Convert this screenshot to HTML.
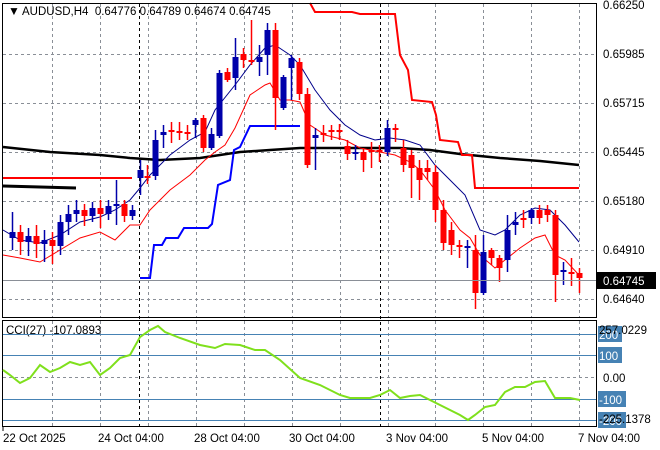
<!DOCTYPE html>
<html><head><meta charset="utf-8"><style>
html,body{margin:0;padding:0;background:#fff;width:660px;height:450px;overflow:hidden}
svg{display:block}
text{font-family:"Liberation Sans",sans-serif;font-size:11.5px;fill:#000}
</style></head><body>
<svg id="s" width="660" height="450" viewBox="0 0 660 450" xmlns="http://www.w3.org/2000/svg">
<g id="grid" stroke="#8a8f97" stroke-dasharray="3,3" stroke-width="1"></g>
<!-- price axis labels -->
<text x="603" y="9">0.66250</text>
<text x="603" y="58">0.65985</text>
<text x="603" y="107">0.65715</text>
<text x="603" y="156">0.65445</text>
<text x="603" y="205">0.65180</text>
<text x="603" y="254">0.64910</text>
<text x="603" y="303">0.64640</text>
<g id="main"></g>
<line x1="2" y1="280.5" x2="596" y2="280.5" stroke="#8a8f97"/>
<rect x="597" y="272" width="59" height="17" fill="#000"/>
<text x="603" y="285" style="fill:#fff">0.64745</text>
<!-- frames -->
<rect x="2.5" y="3.5" width="594" height="314" fill="none" stroke="#000"/>
<rect x="2.5" y="320.5" width="594" height="106" fill="none" stroke="#000"/>
<text x="8" y="15" style="font-size:12px">&#9660;</text>
<text x="22" y="15">AUDUSD,H4&#160;&#160;0.64776 0.64789 0.64674 0.64745</text>
<text x="6" y="334">CCI(27) -107.0893</text>
<!-- CCI levels -->
<g stroke="#4682b4">
<line x1="3" y1="334.5" x2="596" y2="334.5"/>
<line x1="3" y1="355.5" x2="596" y2="355.5"/>
<line x1="3" y1="399.5" x2="596" y2="399.5"/>
<line x1="3" y1="420.5" x2="596" y2="420.5"/>
</g>
<line x1="3" y1="377.5" x2="596" y2="377.5" stroke="#8a8f97" stroke-dasharray="3,3"/>
<g fill="#4682b4">
<rect x="598" y="326" width="24" height="16"/>
<rect x="598" y="347" width="24" height="16"/>
<rect x="598" y="391" width="28" height="16"/>
<rect x="598" y="412" width="28" height="16"/>
</g>
<g style="fill:#fff">
<text x="599" y="339" style="fill:#fff">200</text>
<text x="599" y="360" style="fill:#fff">100</text>
<text x="599" y="404" style="fill:#fff">-100</text>
<text x="599" y="425" style="fill:#fff">-200</text>
</g>
<text x="599" y="334">257.0229</text>
<text x="603" y="382">0.00</text>
<text x="599" y="423">-225.1378</text>
<polyline fill="none" stroke="#7fe01c" stroke-width="2" points="3,370 10,375 20,383 30,378 40,365 50,372 60,368 70,362 80,365 90,362 100,375 110,368 120,358 130,355 140,337 150,330 158,326 165,332 180,338 200,345 215,348 225,344 240,345 255,350 265,350 280,360 300,378 320,385 340,395 350,398 370,398 380,395 390,390 400,398 410,396 420,395 440,405 450,410 460,415 468,420 475,415 485,407 495,405 505,392 515,387 525,387 535,382 545,381 555,398 570,398 580,400"/>
<!-- dates -->
<g stroke="#000"><line x1="3" y1="427" x2="3" y2="431"/></g>
<text x="3" y="442">22 Oct 2025</text>
<text x="98" y="442">24 Oct 04:00</text>
<text x="194" y="442">28 Oct 04:00</text>
<text x="289" y="442">30 Oct 04:00</text>
<text x="386" y="442">3 Nov 04:00</text>
<text x="482" y="442">5 Nov 04:00</text>
<text x="578" y="442">7 Nov 04:00</text>
</svg>
<script>
var NS="http://www.w3.org/2000/svg";
function el(p,t,a){var e=document.createElementNS(NS,t);for(var k in a)e.setAttribute(k,a[k]);p.appendChild(e);return e;}
var g=document.getElementById('grid');
[54,103,152,201,250,299].forEach(function(y){el(g,'line',{x1:3,y1:y+.5,x2:596,y2:y+.5});});
[52,100,148,196,244,292,340,388,435,483,531,579].forEach(function(x){el(g,'line',{x1:x+.5,y1:4,x2:x+.5,y2:317});el(g,'line',{x1:x+.5,y1:321,x2:x+.5,y2:426});});
[139,380].forEach(function(x){el(g,'line',{x1:x+.5,y1:4,x2:x+.5,y2:426,stroke:'#000','stroke-dasharray':'3,3'});});
var m=document.getElementById('main');
// MAs & stops
el(m,'polyline',{fill:'none',stroke:'#000','stroke-width':2.5,points:'3,147 50,152 100,155 130,158 160,160 200,158 240,152 270,150 300,148 400,148 430,150 460,154 500,158 540,161 579,165'});
el(m,'polyline',{fill:'none',stroke:'#000','stroke-width':3,points:'3,186 40,187 76,188'});
el(m,'polyline',{fill:'none',stroke:'#f00','stroke-width':2,points:'3,178 132,178'});
el(m,'polyline',{fill:'none',stroke:'#f00','stroke-width':2,points:'310,3 315,12 352,12 360,14 395,14 400,55 408,70 412,100 432,102 436,115 440,140 458,142 462,155 472,155 475,188 579,188'});
el(m,'polyline',{fill:'none',stroke:'#00f','stroke-width':2,points:'140,278 150,278 154,245 162,245 166,238 178,238 184,228 208,228 212,224 218,185 230,180 234,150 240,147 250,126 300,126'});
el(m,'polyline',{fill:'none',stroke:'#00008b','stroke-width':1,points:'3,230 20,240 40,243 60,235 80,222 100,217 115,210 130,200 140,188 150,175 170,155 190,140 205,132 215,110 235,85 250,65 265,48 275,45 290,55 300,65 315,90 330,110 345,125 360,135 375,140 390,138 405,140 420,145 435,165 450,180 465,195 480,230 495,235 505,230 520,215 535,208 550,210 565,225 579,242'});
el(m,'polyline',{fill:'none',stroke:'#f00','stroke-width':1,points:'3,255 20,258 40,262 60,250 80,238 100,232 115,240 130,225 140,225 150,210 170,190 190,175 205,160 215,152 225,145 235,128 250,95 265,85 270,83 280,100 290,100 300,102 310,125 325,135 345,140 360,148 380,152 395,155 410,162 420,170 435,190 445,210 460,230 470,238 480,255 495,268 505,260 520,248 535,238 545,235 555,255 565,260 579,275'});
// candles: x, open, close, high, low (y px)
var C=[[12,238,232,212,250],[20,232,242,225,255],[28,242,236,228,256],[36,236,244,225,258],[44,244,240,230,262],[52,240,246,232,264],[60,246,222,215,255],[68,222,214,205,235],[76,214,210,200,222],[84,210,216,204,226],[92,216,208,202,222],[100,208,214,200,228],[108,214,206,200,220],[116,206,204,180,225],[124,204,216,200,222],[132,216,210,205,220],[140,178,170,160,195],[147,176,178,165,184],[155,176,140,130,180],[163,135,132,125,148],[171,130,130,122,143],[179,131,131,122,140],[187,132,132,125,140],[195,125,120,118,138],[203,118,148,115,152],[211,148,134,128,150],[219,136,73,70,138],[227,72,80,68,82],[235,78,57,38,90],[243,54,60,48,68],[251,60,60,20,65],[259,62,57,45,76],[267,55,30,23,75],[275,30,98,23,130],[283,108,77,75,110],[291,68,58,55,100],[299,62,94,58,100],[307,94,165,88,168],[315,138,135,128,170],[323,133,133,125,142],[331,130,130,125,140],[339,130,132,124,140],[347,146,154,140,160],[355,154,152,145,160],[363,152,160,148,172],[371,150,150,142,168],[379,150,152,145,162],[387,152,128,120,156],[395,128,130,124,142],[403,148,165,140,172],[411,155,168,150,198],[419,168,180,160,200],[427,168,172,160,180],[435,172,210,165,222],[443,210,243,200,250],[451,230,245,222,255],[459,245,245,240,258],[467,248,246,240,268],[475,250,293,235,309],[483,293,252,235,295],[491,250,258,248,265],[499,258,268,255,282],[507,260,230,215,272],[515,225,222,212,235],[523,218,220,210,228],[531,218,210,208,224],[539,210,218,205,224],[547,210,215,205,222],[555,215,275,210,302],[563,272,270,262,285],[571,272,272,258,286],[579,273,278,268,293]];
C.forEach(function(c){var up=c[2]<c[1];var col=up?'#0000aa':'#f00';
el(m,'line',{x1:c[0]+.5,y1:c[3],x2:c[0]+.5,y2:c[4],stroke:col,'stroke-width':1.5});
var t=Math.min(c[1],c[2]),h=Math.max(2,Math.abs(c[1]-c[2]));
el(m,'rect',{x:c[0]-2.5,y:t,width:6,height:h,fill:col});});
</script>
</body></html>
